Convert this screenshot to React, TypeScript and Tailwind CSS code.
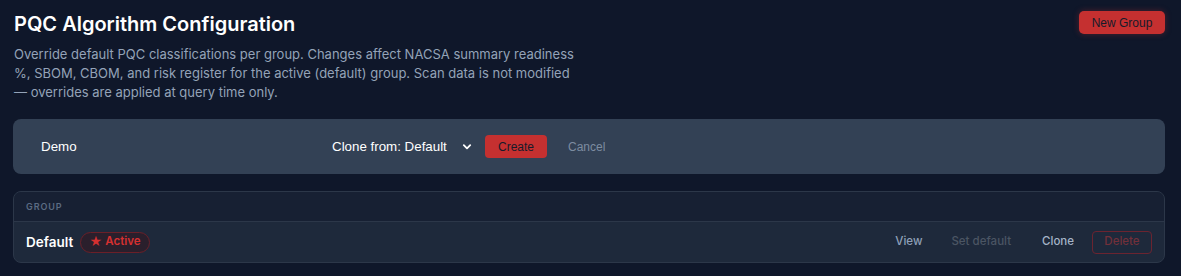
import React from "react";

export default function App() {
  return (
    <div className="min-h-[276px] w-full bg-[#0f172a] pl-[13px] pr-4 pt-[10px] font-['Inter',sans-serif]">
      <div className="flex items-start justify-between">
        <div>
          <h1 className="pl-px text-[20px] font-semibold leading-[28px] text-white">PQC Algorithm Configuration</h1>
          <p className="mt-[7px] max-w-[566px] pl-px text-[13px] leading-[19px] text-[#94a3b8]">
            Override default PQC classifications per group. Changes affect NACSA summary readiness %, SBOM, CBOM, and risk register for the active (default) group. Scan data is not modified — overrides are applied at query time only.
          </p>
        </div>
        <button className="mt-px h-[23px] w-[86px] rounded-[5px] bg-[#c53030] font-['Liberation_Sans',Arial,sans-serif] text-[length:12px] text-[color:#161b2a] shadow-[0_0_6px_rgba(197,48,48,0.35)]">
          New Group
        </button>
      </div>

      <div className="mt-[17px] flex h-[55px] items-center rounded-lg bg-[#334155] px-4 font-['Liberation_Sans',Arial,sans-serif] text-[length:13.33px]">
        <input
          defaultValue="Demo"
          className="w-[280px] bg-transparent px-3 font-['Liberation_Sans',Arial,sans-serif] text-[length:13.33px] text-white outline-none"
        />
        <div className="ml-[12px] flex w-[152px] items-center justify-between pl-[11px] pr-[1px] text-white">
          <span>Clone from: Default</span>
          <svg width="10" height="10" viewBox="0 0 10 10" className="mt-px">
            <path d="M1.8 3.2 L5 6.4 L8.2 3.2" fill="none" stroke="#ffffff" strokeWidth="1.8" strokeLinecap="round" strokeLinejoin="round" />
          </svg>
        </div>
        <button className="ml-[12px] h-[23px] w-[62px] rounded-[4px] bg-[#c53030] font-['Liberation_Sans',Arial,sans-serif] text-[length:12px] text-[color:#161b2a]">
          Create
        </button>
        <button className="ml-[21px] font-['Liberation_Sans',Arial,sans-serif] text-[length:12px] text-[color:#7d8ca1]">Cancel</button>
      </div>

      <div className="mt-[17px] overflow-hidden rounded-lg border border-[#2c3749] bg-[#1e293b]">
        <div className="flex h-[30px] items-center border-b border-[#2c3749] bg-[#172033] px-3">
          <span className="text-[9px] font-semibold uppercase tracking-[0.1em] text-[#5b6b82]">Group</span>
        </div>
        <div className="flex h-[40px] items-center justify-between px-3">
          <div className="flex items-center gap-[7px]">
            <span className="text-[13.5px] font-semibold text-white">Default</span>
            <span className="flex h-[21px] items-center gap-[3px] rounded-full border border-[#6b1f28] bg-[#2a1f2c] px-[8px] text-[11.5px] font-semibold text-[#d63030]">
              <span className="text-[12.5px] leading-none">★</span>Active
            </span>
          </div>
          <div className="flex items-center text-[11.5px] font-medium">
            <button className="text-[#8fa0b8]">View</button>
            <button className="ml-[29px] text-[#4b5563]">Set default</button>
            <button className="ml-[31px] text-[#a5b4c8]">Clone</button>
            <button className="ml-[18px] h-[23px] w-[60px] rounded-[4px] border border-[#6b2430] text-[#72303a]">Delete</button>
          </div>
        </div>
      </div>
    </div>
  );
}
